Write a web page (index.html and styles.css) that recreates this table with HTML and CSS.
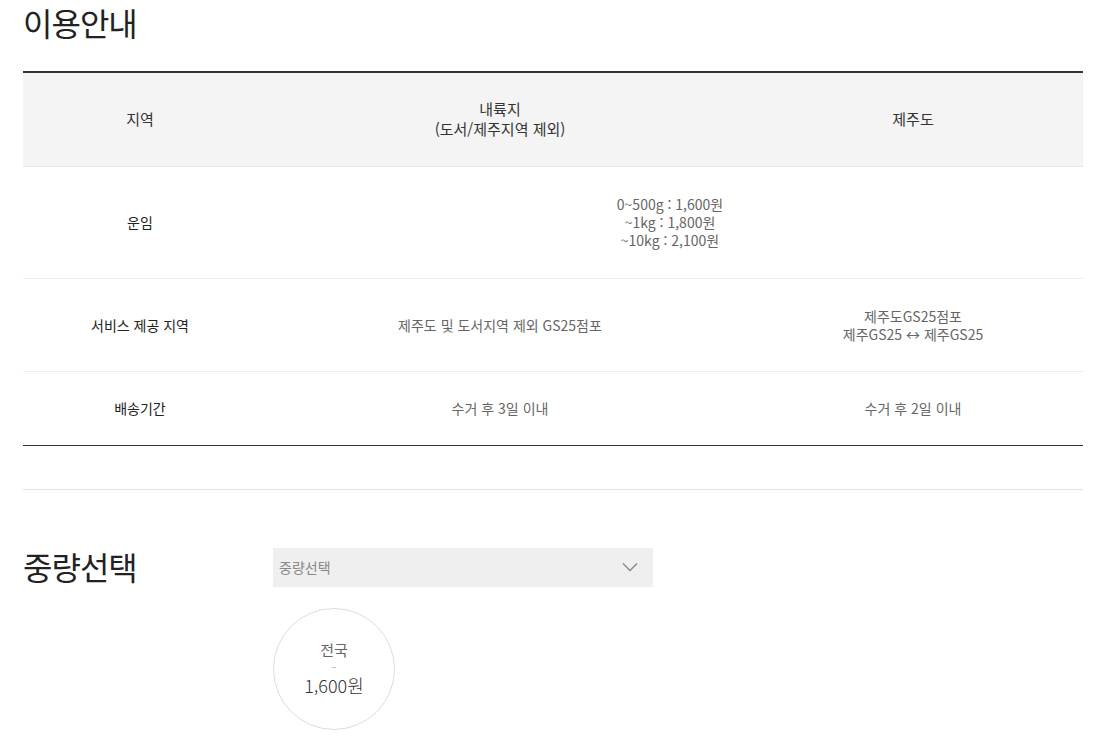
FILE: index.html
```html
<!DOCTYPE html>
<html lang="ko">

<head>
     <meta charset="UTF-8">
     <meta name="viewport" content="width=device-width, initial-scale=1.0">
     <title>이용안내</title>
     <link rel="stylesheet" href="styles.css">
</head>

<body>
     <div id="wrapper">
          <h2 class="sec-title">이용안내</h2>
          <table class="guide-table">
               <colgroup>
                    <col class="c1">
                    <col class="c2">
                    <col class="c3">
               </colgroup>
               <thead>
                    <tr>
                         <th>지역</th>
                         <th>내륙지<br>(도서/제주지역 제외)</th>
                         <th>제주도</th>
                    </tr>
               </thead>
               <tbody>
                    <tr class="row-fee">
                         <th>운임</th>
                         <td colspan="2">0~500g : 1,600원<br>~1kg : 1,800원<br>~10kg : 2,100원</td>
                    </tr>
                    <tr class="row-area">
                         <th>서비스 제공 지역</th>
                         <td>제주도 및 도서지역 제외 GS25점포</td>
                         <td>제주도GS25점포<br>제주GS25 &harr; 제주GS25</td>
                    </tr>
                    <tr class="row-days">
                         <th>배송기간</th>
                         <td>수거 후 3일 이내</td>
                         <td>수거 후 2일 이내</td>
                    </tr>
               </tbody>
          </table>
          <div class="divider"></div>

          <div class="weight-area">
               <h2 class="sec-title">중량선택</h2>
               <div class="weight-right">
                    <div class="select-box">
                         <span>중량선택</span>
                         <svg width="16" height="10" viewBox="0 0 16 10">
                              <path d="M1 1.5 L8 8.5 L15 1.5" fill="none" stroke="#888" stroke-width="1.4" />
                         </svg>
                    </div>
                    <div class="price-circle">
                         <span class="pc-label">전국</span>
                         <span class="pc-dash">&ndash;</span>
                         <span class="pc-price">1,600원</span>
                    </div>
               </div>
          </div>
     </div>
</body>

</html>
```

FILE: styles.css
```css
* {
     padding: 0;
     margin: 0;
     box-sizing: border-box;
     font-family: "Noto Sans CJK KR", "Noto Sans", sans-serif;
}

body {
     background: #fff;
     color: #333;
}

#wrapper {
     width: 1060px;
     margin-left: 23px;
}

.sec-title {
     font-size: 32px;
     font-weight: 400;
     color: #222;
     line-height: 44px;
     letter-spacing: -1px;
}

#wrapper > .sec-title {
     margin-bottom: 27px;
}

.guide-table {
     width: 100%;
     border-collapse: collapse;
     border-top: 2px solid #333;
     border-bottom: 1px solid #333;
     text-align: center;
     font-size: 14px;
}

.guide-table .c1 {
     width: 234px;
}

.guide-table .c2 {
     width: 486px;
}

.guide-table thead th {
     background: #f4f4f4;
     height: 94px;
     font-weight: 400;
     font-size: 15px;
     color: #333;
     line-height: 20px;
     border-bottom: 1px solid #e8e8e8;
}

.guide-table tbody th {
     font-weight: 400;
     color: #222;
}

.guide-table tbody td {
     color: #666;
     line-height: 18px;
}

.guide-table tbody tr {
     border-bottom: 1px solid #eee;
}

.guide-table tbody tr:last-child {
     border-bottom: none;
}

.row-fee {
     height: 112px;
}

.row-area {
     height: 93px;
}

.row-days {
     height: 74px;
}

.divider {
     margin-top: 43px;
     border-top: 1px solid #e3e3e3;
}

.weight-area {
     display: flex;
     margin-top: 58px;
}

.weight-area .sec-title {
     width: 250px;
     line-height: 36px;
}

.select-box {
     width: 380px;
     height: 39px;
     background: #efefef;
     display: flex;
     align-items: center;
     justify-content: space-between;
     padding: 0 15px 0 6px;
     font-size: 14px;
     color: #888;
}

.price-circle {
     margin-top: 21px;
     width: 122px;
     height: 122px;
     border: 1px solid #ddd;
     border-radius: 50%;
     display: flex;
     flex-direction: column;
     align-items: center;
     justify-content: center;
     color: #666;
}

.pc-label {
     font-size: 15px;
     line-height: 20px;
}

.pc-dash {
     font-size: 10px;
     line-height: 12px;
     color: #aaa;
}

.pc-price {
     font-size: 18px;
     font-weight: 300;
     line-height: 26px;
     color: #333;
}
```
